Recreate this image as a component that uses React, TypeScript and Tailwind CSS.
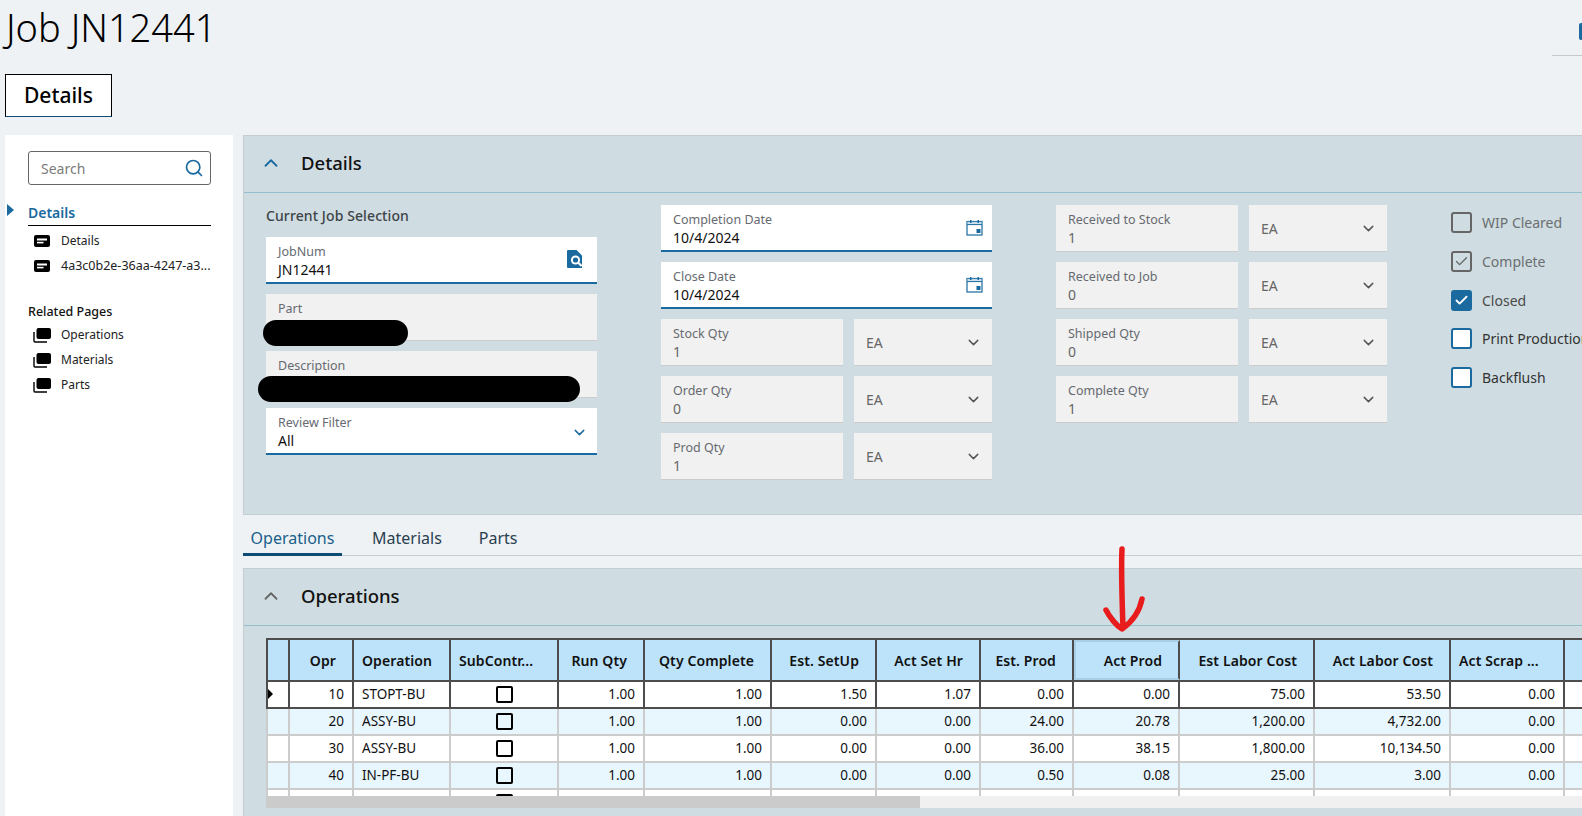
import React from "react";
import { ChevronDown, ChevronUp, Search, Check } from "lucide-react";

const FONT = "font-['Noto_Sans','Liberation_Sans',sans-serif]";

function DocIcon() {
  return (
    <svg width="16" height="12" viewBox="0 0 16 12" className="shrink-0">
      <rect x="0" y="0" width="16" height="12" rx="2" fill="#000" />
      <rect x="3" y="3.5" width="10" height="2" fill="#fff" />
      <rect x="3" y="6.8" width="6.5" height="1.6" fill="#fff" />
    </svg>
  );
}

function StackIcon() {
  return (
    <svg width="18" height="15" viewBox="0 0 18 15" className="shrink-0">
      <rect x="3.5" y="0" width="14.5" height="11" rx="2" fill="#000" />
      <path d="M1 4v9a1 1 0 0 0 1 1h12" fill="none" stroke="#000" strokeWidth="1.4" />
    </svg>
  );
}

function CalendarIcon() {
  return (
    <svg width="17" height="17" viewBox="0 0 17 17">
      <rect x="1" y="2.5" width="15" height="13.5" fill="none" stroke="#1a6a9f" strokeWidth="1.2" />
      <rect x="1" y="2.5" width="15" height="3" fill="#9cc2da" opacity="0.5" />
      <path d="M1 5.6h15" stroke="#1a6a9f" strokeWidth="1" />
      <rect x="4" y="1" width="1.5" height="3" fill="#1a6a9f" />
      <rect x="11.5" y="1" width="1.5" height="3" fill="#1a6a9f" />
      <rect x="10.5" y="10" width="4" height="4" fill="#1a6a9f" />
    </svg>
  );
}

function FileSearchIcon() {
  return (
    <svg width="15" height="18" viewBox="0 0 15 18">
      <path d="M1 0h8.5L15 5.5V18H1a1 1 0 0 1-1-1V1a1 1 0 0 1 1-1z" fill="#1a6a9f" />
      <circle cx="8.5" cy="10" r="4.6" fill="#fff" />
      <circle cx="8.5" cy="10" r="2.6" fill="#1a6a9f" />
      <path d="M11.5 13l3 3" stroke="#fff" strokeWidth="2" />
    </svg>
  );
}

function Field({
  label,
  value,
  editable,
  right,
  width = "w-full",
}: {
  label: string;
  value: string;
  editable?: boolean;
  right?: React.ReactNode;
  width?: string;
}) {
  return (
    <div
      className={`${width} h-[47px] shrink-0 pl-[12px] pr-[9px] pt-[6px] flex items-start justify-between ${
        editable ? "bg-white border-b-2 border-[#1a6a9f]" : "bg-[#f1f1f1] border-b border-[#cccccc]"
      }`}
    >
      <div className="flex flex-col">
        <span className="text-[12.5px] leading-[18px] text-[#666a70]">{label}</span>
        <span className={`text-[14px] leading-[18px] ${editable ? "text-[#111]" : "text-[#666]"}`}>{value}</span>
      </div>
      {right}
    </div>
  );
}

function Unit() {
  return (
    <div className="flex-1 h-[47px] bg-[#f1f1f1] border-b border-[#cccccc] pl-[12px] pr-[10px] flex items-center justify-between">
      <span className="text-[14px] text-[#666]">EA</span>
      <ChevronDown size={17} strokeWidth={2} color="#555" />
    </div>
  );
}

function QtyRow({ label, value }: { label: string; value: string }) {
  return (
    <div className="flex gap-[11px]">
      <Field label={label} value={value} width="w-[182px]" />
      <Unit />
    </div>
  );
}

function CheckRow({ label, state }: { label: string; state: "off" | "greyOn" | "on" | "blue" }) {
  const box =
    state === "on"
      ? "bg-[#1a6a9f] border-[#1a6a9f]"
      : state === "blue"
      ? "bg-white border-[#1a6a9f]"
      : "border-[#666]";
  const text = state === "blue" ? "text-[#333]" : state === "on" ? "text-[#4a4a4a]" : "text-[#6b6f72]";
  return (
    <div className="flex items-center h-[21px] gap-[10px] whitespace-nowrap">
      <div className={`w-[21px] h-[21px] shrink-0 rounded-[3px] border-2 flex items-center justify-center ${box}`}>
        {state === "on" && <Check size={15} strokeWidth={3} color="#fff" />}
        {state === "greyOn" && <Check size={15} strokeWidth={2.2} color="#666" />}
      </div>
      <span className={`text-[14px] ${text}`}>{label}</span>
    </div>
  );
}

const COLS = [
  { w: "w-[22px]", h: "", align: "" },
  { w: "w-[64px]", h: "Opr", align: "r" },
  { w: "w-[97px]", h: "Operation", align: "l" },
  { w: "w-[108px]", h: "SubContr...", align: "c" },
  { w: "w-[86px]", h: "Run Qty", align: "r" },
  { w: "w-[127px]", h: "Qty Complete", align: "r" },
  { w: "w-[105px]", h: "Est. SetUp", align: "r" },
  { w: "w-[104px]", h: "Act Set Hr", align: "r" },
  { w: "w-[93px]", h: "Est. Prod", align: "r" },
  { w: "w-[106px]", h: "Act Prod", align: "r" },
  { w: "w-[135px]", h: "Est Labor Cost", align: "r" },
  { w: "w-[136px]", h: "Act Labor Cost", align: "r" },
  { w: "w-[114px]", h: "Act Scrap ...", align: "l" },
  { w: "w-[60px]", h: "", align: "" },
];

const ROWS = [
  ["", "10", "STOPT-BU", "", "1.00", "1.00", "1.50", "1.07", "0.00", "0.00", "75.00", "53.50", "0.00", ""],
  ["", "20", "ASSY-BU", "", "1.00", "1.00", "0.00", "0.00", "24.00", "20.78", "1,200.00", "4,732.00", "0.00", ""],
  ["", "30", "ASSY-BU", "", "1.00", "1.00", "0.00", "0.00", "36.00", "38.15", "1,800.00", "10,134.50", "0.00", ""],
  ["", "40", "IN-PF-BU", "", "1.00", "1.00", "0.00", "0.00", "0.50", "0.08", "25.00", "3.00", "0.00", ""],
  ["", "", "", "", "", "", "", "", "", "", "", "", "", ""],
];

function HeaderRow() {
  return (
    <div className="flex w-max h-[44px] shrink-0 bg-[#bce3fa] border-t-2 border-b-2 border-l-2 border-[#4d4d4d]">
      {COLS.map((c, i) => (
        <div
          key={i}
          className={`${c.w} h-full shrink-0 border-r-2 border-[#4d4d4d] flex items-center text-[14px] tracking-[0.1px] font-semibold text-[#111] whitespace-nowrap ${
            c.align === "r" ? "justify-end pr-[16px]" : "justify-start pl-[8px]"
          } ${c.h === "Act Prod" ? "border-l-2 border-l-[#a9cfe6] border-t-2 border-t-[#a9cfe6] border-b-2 border-b-[#a9cfe6]" : ""}`}
        >
          {c.h}
        </div>
      ))}
    </div>
  );
}

function DataRow({ row, idx }: { row: string[]; idx: number }) {
  const first = idx === 0;
  const sep = first ? "border-[#4d4d4d]" : "border-[#cccccc]";
  return (
    <div
      className={`relative flex w-max h-[27px] shrink-0 border-b-2 border-l-2 ${sep} ${
        idx % 2 === 1 ? "bg-[#e8f6fe]" : "bg-white"
      }`}
    >
      {first && (
        <div className="absolute left-0 top-[7px] w-0 h-0 border-y-[5px] border-y-transparent border-l-[5px] border-l-black" />
      )}
      {COLS.map((c, i) => (
        <div
          key={i}
          className={`${c.w} h-full shrink-0 border-r-2 ${sep} flex items-center text-[13.5px] text-[#111] whitespace-nowrap ${
            i === 2 ? "justify-start pl-[8px]" : i === 3 ? "justify-center" : "justify-end pr-[8px]"
          }`}
        >
          {i === 3 ? <div className="w-[17px] h-[17px] rounded-[2px] border-2 border-black" /> : row[i]}
        </div>
      ))}
    </div>
  );
}

function PanelHeader({ title, blue }: { title: string; blue?: boolean }) {
  return (
    <div className="h-[57px] flex items-center pl-[16px] pb-[3px] gap-[19px] border-b border-[#93bfcf]">
      <ChevronUp size={22} strokeWidth={2} color={blue ? "#1a6a9f" : "#666"} />
      <span className="text-[18.5px] font-medium text-[#111]">{title}</span>
    </div>
  );
}

export default function App() {
  return (
    <div className={`${FONT} relative h-[816px] w-full overflow-hidden bg-[#eef2f5] flex flex-col`}>
      {/* Title bar */}
      <div className="h-[74px] shrink-0 flex items-start justify-between">
        <h1 className="ml-[6px] mt-[2px] text-[38px] leading-[50px] font-light text-black">Job JN12441</h1>
        <div className="w-[30px] mt-[23px] flex flex-col items-end">
          <div className="w-[3px] h-[17px] bg-[#1a6a9f] rounded-l-[2px]" />
          <div className="w-full h-px bg-[#c8c8c8] mt-[15px]" />
        </div>
      </div>

      {/* Page tab */}
      <div className="h-[61px] shrink-0 pl-[5px]">
        <div className="w-[107px] h-[43px] bg-white border border-black border-b-[#0f4c75] flex items-center justify-center text-[21px] font-medium text-black">
          Details
        </div>
      </div>

      <div className="flex-1 min-h-0 flex pl-[5px]">
        {/* Sidebar */}
        <aside className="w-[228px] shrink-0 bg-white pt-[16px] pl-[23px] pr-[22px]">
          <div className="h-[34px] rounded-[3px] border border-[#666] flex items-center justify-between pl-[12px] pr-[6px]">
            <span className="text-[14px] text-[#7b7b7b]">Search</span>
            <Search size={20} strokeWidth={2} color="#1a6a9f" />
          </div>
          <div className="relative mt-[15px] h-[26px] border-b border-black flex items-center pb-[1px]">
            <div className="absolute left-[-21px] top-[4px] w-0 h-0 border-y-[6px] border-y-transparent border-l-[7px] border-l-[#1a6a9f]" />
            <span className="text-[14px] font-semibold text-[#1a6a9f]">Details</span>
          </div>
          <div className="flex flex-col gap-[5px] mt-[5px] pl-[6px]">
            <div className="flex items-center gap-[11px] h-[20px]">
              <DocIcon />
              <span className="text-[12px] text-[#222]">Details</span>
            </div>
            <div className="flex items-center gap-[11px] h-[20px]">
              <DocIcon />
              <span className="text-[12.5px] text-[#222] whitespace-nowrap">4a3c0b2e-36aa-4247-a3...</span>
            </div>
          </div>
          <div className="mt-[27px] text-[12.5px] font-medium leading-[18px] text-[#111]">Related Pages</div>
          <div className="flex flex-col gap-[5px] mt-[4px] pl-[5px]">
            {["Operations", "Materials", "Parts"].map((t) => (
              <div key={t} className="flex items-center gap-[10px] h-[20px]">
                <StackIcon />
                <span className="text-[12px] text-[#222]">{t}</span>
              </div>
            ))}
          </div>
        </aside>

        {/* Main */}
        <main className="ml-[10px] flex-1 min-w-0 flex flex-col overflow-hidden">
          <section className="h-[380px] shrink-0 bg-[#cfdce1] border border-[#c4cdd1] border-r-0">
            <PanelHeader title="Details" blue />
            <div className="flex pl-[22px] pt-[12px]">
              {/* Column 1 */}
              <div className="w-[331px] shrink-0">
                <div className="h-[32px] flex items-start text-[14px] font-medium tracking-[0.1px] text-[#3d4448] whitespace-nowrap">Current Job Selection</div>
                <div className="flex flex-col gap-[10px]">
                  <Field label="JobNum" value="JN12441" editable right={<div className="mt-[7px] mr-[6px]"><FileSearchIcon /></div>} />
                  <Field label="Part" value="" />
                  <Field label="Description" value="" />
                  <Field
                    label="Review Filter"
                    value="All"
                    editable
                    right={<div className="mt-[10px]"><ChevronDown size={17} strokeWidth={2} color="#1a6a9f" /></div>}
                  />
                </div>
              </div>
              {/* Column 2 */}
              <div className="w-[331px] shrink-0 ml-[64px] flex flex-col gap-[10px]">
                <Field label="Completion Date" value="10/4/2024" editable right={<div className="mt-[8px]"><CalendarIcon /></div>} />
                <Field label="Close Date" value="10/4/2024" editable right={<div className="mt-[8px]"><CalendarIcon /></div>} />
                <QtyRow label="Stock Qty" value="1" />
                <QtyRow label="Order Qty" value="0" />
                <QtyRow label="Prod Qty" value="1" />
              </div>
              {/* Column 3 */}
              <div className="w-[331px] shrink-0 ml-[64px] flex flex-col gap-[10px]">
                <QtyRow label="Received to Stock" value="1" />
                <QtyRow label="Received to Job" value="0" />
                <QtyRow label="Shipped Qty" value="0" />
                <QtyRow label="Complete Qty" value="1" />
              </div>
              {/* Column 4 */}
              <div className="ml-[64px] pt-[7px] flex flex-col gap-[17.75px]">
                <CheckRow label="WIP Cleared" state="off" />
                <CheckRow label="Complete" state="greyOn" />
                <CheckRow label="Closed" state="on" />
                <CheckRow label="Print Production" state="blue" />
                <CheckRow label="Backflush" state="blue" />
              </div>
            </div>
          </section>

          {/* Tabs */}
          <div className="h-[41px] shrink-0 flex items-end border-b border-[#c8cfd3] mb-[12px]">
            <div className="w-[99px] h-[33px] flex justify-center items-center border-b-[3px] border-[#0f4c75] text-[16px] text-[#1a5f8a] -mb-px">Operations</div>
            <div className="ml-[30px] h-[33px] pb-[3px] flex items-center text-[16px] text-[#2a3f50] -mb-px">Materials</div>
            <div className="ml-[37px] h-[33px] pb-[3px] flex items-center text-[16px] text-[#2a3f50] -mb-px">Parts</div>
          </div>

          <section className="flex-1 min-h-0 bg-[#cfdce1] border-t border-l border-[#c4cdd1] flex flex-col">
            <PanelHeader title="Operations" />
            <div className="pl-[22px] pt-[12px] flex-1 min-h-0">
              <div className="h-[158px] overflow-hidden flex flex-col">
                <HeaderRow />
                {ROWS.map((r, i) => (
                  <DataRow key={i} row={r} idx={i} />
                ))}
              </div>
              <div className="h-[12px] flex">
                <div className="w-[654px] h-full bg-[#cbcbcb]" />
                <div className="flex-1 h-full bg-[#f0f0f0]" />
              </div>
            </div>
          </section>
        </main>
      </div>

      {/* Redaction marks drawn over the form */}
      <div className="absolute left-[263px] top-[320px] w-[145px] h-[26px] rounded-full bg-black" />
      <div className="absolute left-[258px] top-[376px] w-[322px] h-[26px] rounded-full bg-black" />

      {/* Red annotation arrow */}
      <svg className="absolute left-[1095px] top-[540px]" width="55" height="100" viewBox="0 0 55 100" fill="none">
        <path
          d="M27 9 C26 30 27 60 28 88 M11 70 C15 78 22 86 27 89 C34 84 44 74 47 59"
          stroke="#e81c1c"
          strokeWidth="5.5"
          strokeLinecap="round"
          strokeLinejoin="round"
        />
      </svg>
    </div>
  );
}
